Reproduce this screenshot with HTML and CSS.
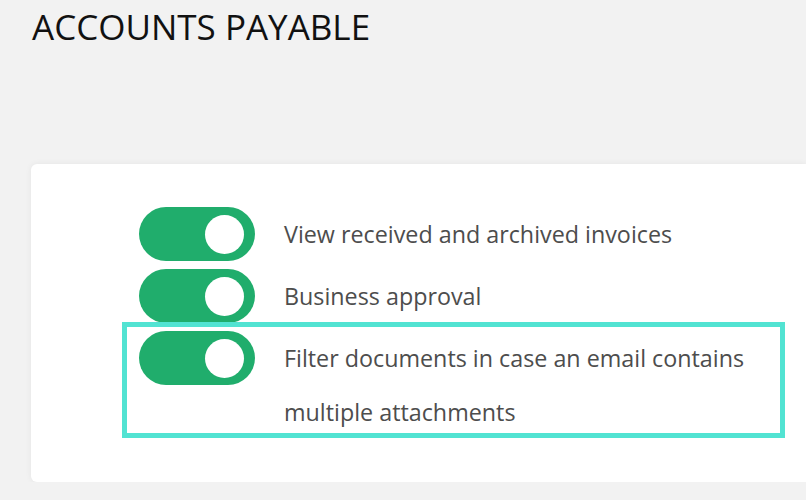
FILE: index.html
```html
<!DOCTYPE html>
<html lang="en">
<head>
    <meta charset="UTF-8">
    <meta name="viewport" content="width=device-width, initial-scale=1.0">
    <title>Accounts Payable</title>
    <link rel="stylesheet" href="styles.css">
</head>
<body>
    <h1 class="title">ACCOUNTS PAYABLE</h1>

    <div class="card">
        <div class="row">
            <span class="toggle on"><span class="knob"></span></span>
            <span class="label">View received and archived invoices</span>
        </div>
        <div class="row">
            <span class="toggle on"><span class="knob"></span></span>
            <span class="label">Business approval</span>
        </div>
        <div class="row marked">
            <span class="toggle on"><span class="knob"></span></span>
            <span class="label">Filter documents in case an email contains multiple attachments</span>
            <span class="highlight"></span>
        </div>
    </div>
</body>
</html>
```

FILE: styles.css
```css
body {
    margin: 0;
    background: #f2f2f2;
    font-family: "Open Sans", "Liberation Sans", sans-serif;
    overflow: hidden;
}
.title {
    margin: 0;
    padding: 4px 0 0 32px;
    font-size: 35px;
    font-weight: 400;
    color: #111;
    line-height: 46px;
}
.card {
    margin: 114px 0 0 31px;
    padding: 43px 0 43px 108px;
    background: #fff;
    border-radius: 6px 0 0 6px;
    box-shadow: 0 0 6px rgba(0,0,0,0.06);
}
.row {
    display: flex;
    align-items: flex-start;
    margin-bottom: 8px;
}
.row:last-child {
    margin-bottom: 0;
}
.marked {
    position: relative;
}
.toggle {
    flex: none;
    width: 116px;
    height: 54px;
    border-radius: 27px;
    background: #ccc;
    position: relative;
}
.toggle.on {
    background: #20ad6c;
}
.knob {
    position: absolute;
    top: 7.5px;
    left: 66px;
    width: 39px;
    height: 39px;
    border-radius: 50%;
    background: #fff;
}
.label {
    margin-left: 29px;
    max-width: 500px;
    font-size: 23.3px;
    line-height: 54px;
    color: #4d4d4d;
}
.highlight {
    position: absolute;
    top: -9px;
    left: -17px;
    width: 663px;
    height: 116px;
    box-sizing: border-box;
    border: 5px solid #52e3d2;
}
```
